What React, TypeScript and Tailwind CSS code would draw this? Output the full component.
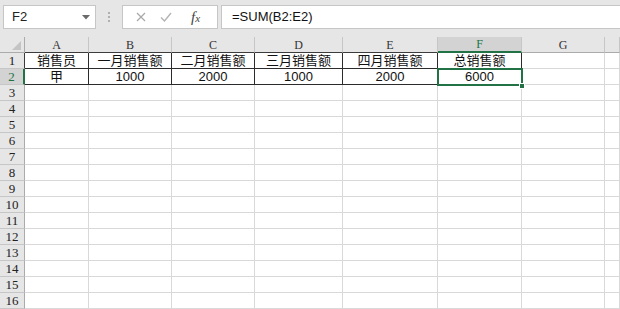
const colLetters = ["A", "B", "C", "D", "E", "F", "G", ""];

const data: string[][] = [
  ["销售员", "一月销售额", "二月销售额", "三月销售额", "四月销售额", "总销售额"],
  ["甲", "1000", "2000", "1000", "2000", "6000"],
];

const rows = Array.from({ length: 16 }, (_, i) => i + 1);

const headerCell = (i: number) => {
  if (i === 5)
    return "bg-[#d3d3d3] text-[#217346] border-r border-r-[#c6c6c6] border-b-2 border-b-[#217346]";
  if (i < 5) return "bg-[#e6e6e6] text-[#333] border-r border-r-[#c6c6c6] border-b border-b-[#3c3c3c]";
  return "bg-[#e6e6e6] text-[#333] border-r border-r-[#c6c6c6] border-b border-b-[#ababab]";
};

const rowHeadCell = (r: number) => {
  if (r === 2)
    return "bg-[#d3d3d3] text-[#217346] border-r-2 border-r-[#217346] border-b border-b-[#c6c6c6]";
  if (r === 1) return "bg-[#e6e6e6] text-[#222] border-r border-r-[#3c3c3c] border-b border-b-[#c6c6c6]";
  return "bg-[#e6e6e6] text-[#222] border-r border-r-[#ababab] border-b border-b-[#c6c6c6]";
};

const bodyCell = (r: number, c: number) => {
  if (r <= 2 && c < 6) return "border-r border-b border-[#2b2b2b]";
  return "border-r border-b border-[#d9d9d9]";
};

const App = () => {
  return (
    <div className="w-[620px] h-[309px] overflow-hidden bg-white font-['Liberation_Sans','Noto_Sans_CJK_SC',sans-serif]">
      {/* formula bar */}
      <div className="h-[37px] bg-[#e6e6e6] flex items-start pt-[5px]">
        <div className="ml-[3px] w-[93px] h-[24px] bg-white border border-[#c6c6c6] flex items-center justify-between pl-[8px] pr-[5px]">
          <span className="text-[13px] text-[#222]">F2</span>
          <svg width="8" height="5" viewBox="0 0 8 5">
            <path d="M0 0 L8 0 L4 4.5 Z" fill="#6a6a6a" />
          </svg>
        </div>
        <div className="w-[26px] h-[24px] flex flex-col items-center justify-center gap-[2px]">
          <span className="w-[2px] h-[2px] bg-[#b0b0b0]" />
          <span className="w-[2px] h-[2px] bg-[#b0b0b0]" />
          <span className="w-[2px] h-[2px] bg-[#b0b0b0]" />
        </div>
        <div className="w-[96px] h-[24px] bg-white border border-[#c6c6c6] flex items-center">
          <svg className="ml-[13px]" width="10" height="10" viewBox="0 0 10 10">
            <path d="M1 1 L9 9 M9 1 L1 9" stroke="#a8a8a8" strokeWidth="1.2" />
          </svg>
          <svg className="ml-[14px]" width="12" height="10" viewBox="0 0 12 10">
            <path d="M1 5.5 L4.5 9 L11 1" stroke="#b4b4b4" strokeWidth="1.4" fill="none" />
          </svg>
          <span className="ml-[19px] text-[15px] italic text-[#444] font-['Liberation_Serif',serif] leading-none">
            f<span className="text-[11px]">x</span>
          </span>
        </div>
        <div className="ml-[3px] flex-1 h-[24px] bg-white border border-[#c6c6c6] border-r-0 flex items-center pl-[10px]">
          <span className="text-[13px] text-[#111]">=SUM(B2:E2)</span>
        </div>
      </div>

      {/* sheet */}
      <div className="relative grid grid-cols-[25px_64px_83px_83px_88px_95px_84px_83px_1fr] auto-rows-[16px]">
        <div className="bg-[#e6e6e6] border-r border-b border-[#ababab] flex items-end justify-end pr-[3px] pb-[2px]">
          <svg width="9" height="9" viewBox="0 0 9 9">
            <path d="M9 0 L9 9 L0 9 Z" fill="#c4c4c4" />
          </svg>
        </div>
        {colLetters.map((l, i) => (
          <div
            key={"h" + i}
            className={
              "flex items-center justify-center text-[12px] font-['Liberation_Serif',serif] " + headerCell(i)
            }
          >
            {l}
          </div>
        ))}
        {rows.map((r) => (
          <div key={"r" + r} className="contents">
            <div
              className={
                "flex items-center justify-center text-[13px] font-['Liberation_Serif',serif] " + rowHeadCell(r)
              }
            >
              {r}
            </div>
            {colLetters.map((_, c) => (
              <div
                key={"c" + r + c}
                className={"flex items-center justify-center text-[13px] text-[#111] " + bodyCell(r, c)}
              >
                {r <= 2 && c < 6 ? data[r - 1][c] : ""}
              </div>
            ))}
          </div>
        ))}

        {/* selection of F2 */}
        <div className="absolute left-[437px] top-[31px] w-[86px] h-[18px] border-2 border-[#217346] pointer-events-none" />
        <div className="absolute left-[519px] top-[46px] w-[6px] h-[6px] bg-[#217346] border border-white pointer-events-none" />
      </div>
    </div>
  );
};

export default App;
